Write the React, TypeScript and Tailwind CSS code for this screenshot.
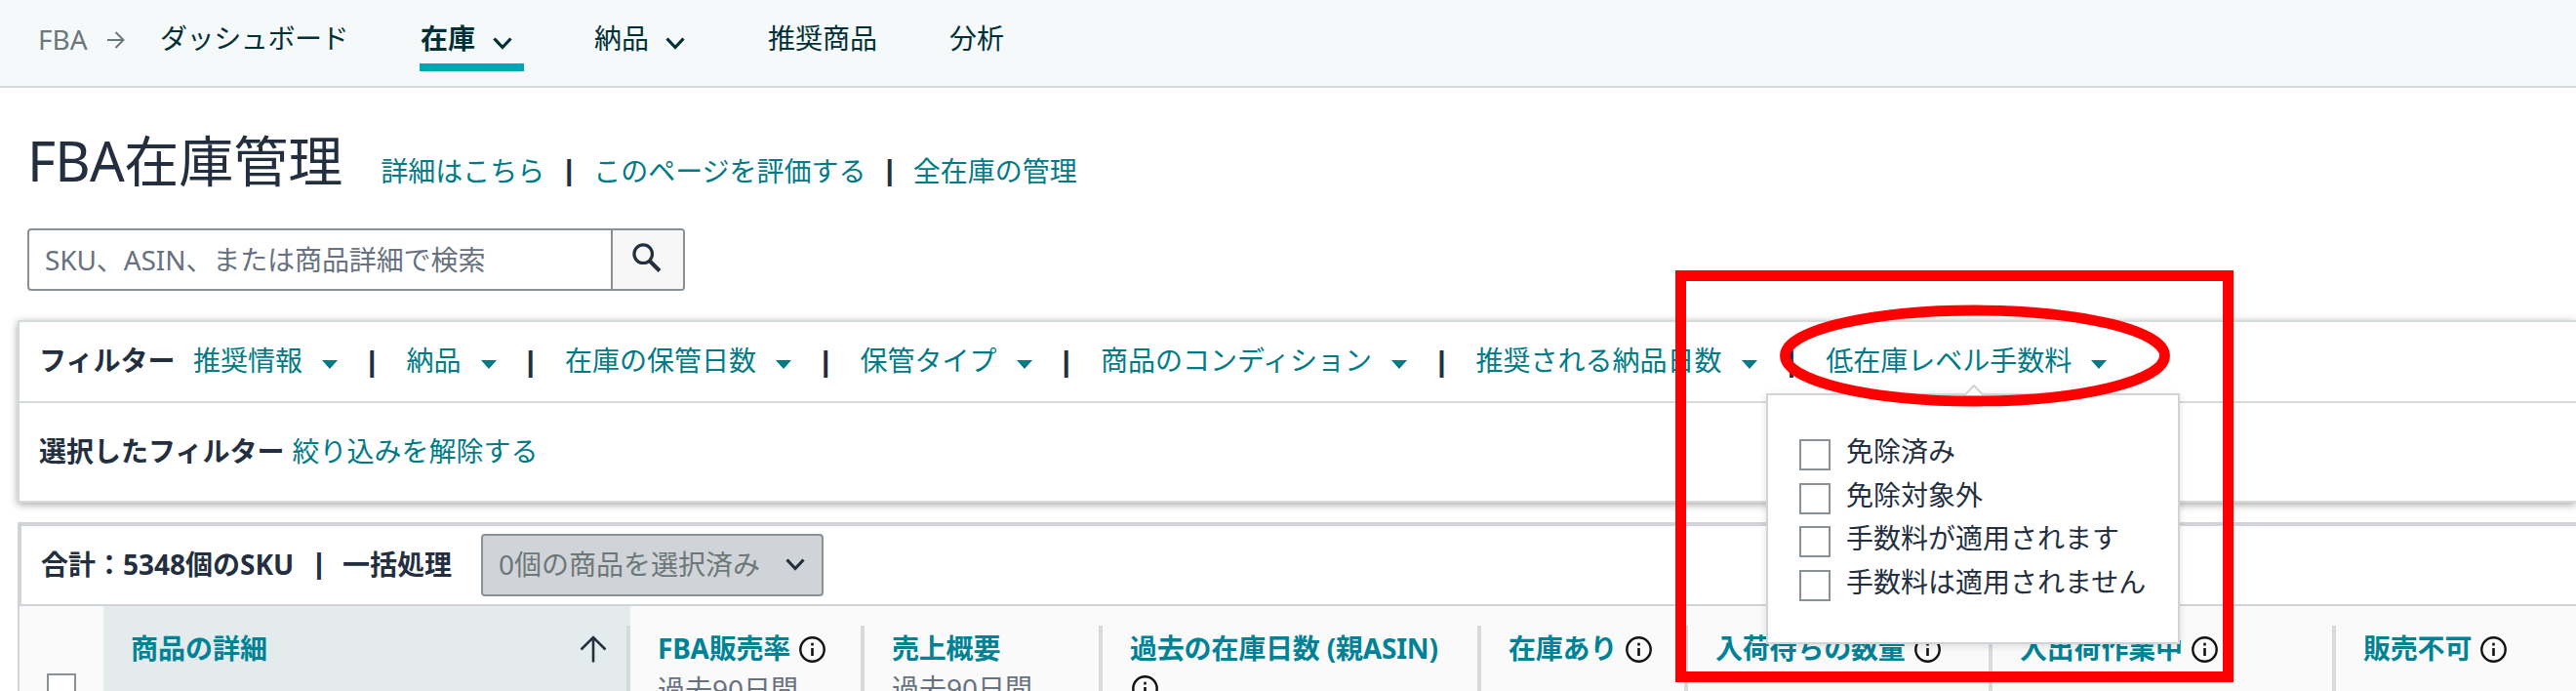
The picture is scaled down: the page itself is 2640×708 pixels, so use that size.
import { useState } from "react";
import clsx from "clsx";

// ── Data ──────────────────────────────────────────────────────────────────────

interface Column {
  label: string;
  sub?: string;
  info?: boolean;
  wrapInfo?: boolean;
  width: string;
}

const FILTERS = ["推奨情報", "納品", "在庫の保管日数", "保管タイプ", "商品のコンディション", "推奨される納品日数", "低在庫レベル手数料"];

const FEE_OPTIONS = ["免除済み", "免除対象外", "手数料が適用されます", "手数料は適用されません"];

const COLUMNS: Column[] = [
  { label: "FBA販売率", sub: "過去90日間", info: true, width: "w-[240px]" },
  { label: "売上概要", sub: "過去90日間", width: "w-[244px]" },
  { label: "過去の在庫日数 (親ASIN)", info: true, wrapInfo: true, width: "w-[388px]" },
  { label: "在庫あり", info: true, width: "w-[212px]" },
  { label: "入荷待ちの数量", info: true, width: "w-[312px]" },
  { label: "入出荷作業中", info: true, width: "w-[352px]" },
  { label: "販売不可", info: true, width: "w-[300px]" },
];

// ── Icons ─────────────────────────────────────────────────────────────────────

function Chevron({ className }: { className?: string }) {
  return (
    <svg width="20" height="13" viewBox="0 0 20 13" fill="none" className={clsx("shrink-0", className)}>
      <path d="M1.500 1.500 10 10.500 18.500 1.500" stroke="currentColor" strokeWidth="3.200" />
    </svg>
  );
}

function Caret() {
  return (
    <svg width="16" height="9" viewBox="0 0 16 9" className="ml-5 mt-2 shrink-0">
      <path d="M0 0h16L8 9z" fill="#007a87" />
    </svg>
  );
}

function InfoIcon({ className }: { className?: string }) {
  return (
    <svg width="27" height="27" viewBox="0 0 27 27" fill="none" className={clsx("shrink-0", className)}>
      <circle cx="13.5" cy="13.5" r="12.2" stroke="#111" strokeWidth="2.4" />
      <path d="M13.500 12v8M13.500 6.800v2.800" stroke="#111" strokeWidth="2.6" />
    </svg>
  );
}

function Bar({ className }: { className?: string }) {
  return (
    <span className={clsx("shrink-0 text-center font-['Liberation_Sans',sans-serif] text-[30px] font-bold text-[#232f3e]", className)}>|</span>
  );
}

// ── Sections ──────────────────────────────────────────────────────────────────

function TopNav() {
  return (
    <nav className="flex h-[90px] items-start border-b-2 border-[#d5dbdb] bg-[#f5f9fa] pl-[39px] pt-[25px] text-[#002f36]">
      <span className="w-12 pt-px text-[#6c7778]">FBA</span>
      <svg width="18" height="18" viewBox="0 0 18 18" fill="none" className="ml-[23px] mt-[7px]">
        <path d="M0 9h16M8.500 1l8 8-8 8" stroke="#6c7778" strokeWidth="2" />
      </svg>
      <span className="ml-[36px] w-[266px] tracking-[-0.4px]">ダッシュボード</span>
      <div className="flex h-12 w-[107px] justify-between border-b-8 border-[#00a4b4] pl-px pr-[12px] font-bold">
        在庫
        <Chevron className="mt-[13px]" />
      </div>
      <div className="ml-[72px] flex w-[178px] gap-[17px]">
        納品
        <Chevron className="mt-[13px]" />
      </div>
      <span className="w-[186px]">推奨商品</span>
      <span>分析</span>
    </nav>
  );
}

function TitleRow() {
  return (
    <div className="mt-[46px] flex h-14 items-baseline pl-7">
      <h1 className="text-[56px] leading-[56px] text-[#232f3e]">
        <span className="tracking-[-0.7px]">FBA</span>在庫管理
      </h1>
      <div className="ml-[39px] flex text-[#007a87]">
        <a>詳細はこちら</a>
        <Bar className="w-[50px]" />
        <a>このページを評価する</a>
        <Bar className="w-[48px]" />
        <a>全在庫の管理</a>
      </div>
    </div>
  );
}

function SearchBox() {
  return (
    <div className="ml-7 mt-[42px] flex h-16 w-[674px] overflow-hidden rounded-[4px] border-2 border-[#879196]">
      <div className="flex-1 pl-4 pt-4 tracking-[-0.1px] text-[#67717f]">SKU、ASIN、または商品詳細で検索</div>
      <div className="w-[74px] border-l-2 border-[#879196] bg-[#f7f7f7] pl-5 pt-[13px]">
        <svg width="30" height="30" viewBox="0 0 30 30" fill="none">
          <circle cx="11.2" cy="11.2" r="9.3" stroke="#232f3e" strokeWidth="3.2" />
          <path d="M18 18.500 28 28.500" stroke="#232f3e" strokeWidth="4" />
        </svg>
      </div>
    </div>
  );
}

function FeePopover() {
  const [checked, setChecked] = useState<string[]>([]);
  const toggle = (o: string) => setChecked((c) => (c.includes(o) ? c.filter((x) => x !== o) : [...c, o]));

  return (
    <div className="absolute left-[1810px] top-[403px] h-[257px] w-[424px] border-2 border-[#d0d4d9] bg-white pl-8 pt-[45px] shadow-[0_2px_8px_rgba(0,0,0,0.12)]">
      <svg width="20" height="12" viewBox="0 0 20 12" className="absolute left-[201px] top-[-11px]">
        <path d="M0 12 10 1l10 11z" fill="#fff" />
        <path d="M0.500 11 10 1l9.500 10" fill="none" stroke="#d0d4d9" strokeWidth="2" />
      </svg>
      {FEE_OPTIONS.map((o) => (
        <label key={o} className="flex h-[44.670px] gap-4 text-[#232f3e]">
          <input
            type="checkbox"
            checked={checked.includes(o)}
            onChange={() => toggle(o)}
            className="size-8 shrink-0 appearance-none border-2 border-[#879196] bg-white checked:bg-[#008296]"
          />
          <span className="-mt-0.5">{o}</span>
        </label>
      ))}
    </div>
  );
}

function FilterPanel() {
  return (
    <section className="ml-[18px] mt-[30px] h-[187px] border-2 border-r-0 border-[#d5dbdb] shadow-[0_2px_8px_rgba(0,0,0,0.35)]">
      <div className="flex h-[83px] items-start border-b-2 border-[#d5dbdb] pl-5 pt-[25px]">
        <strong className="mr-[18px] w-[140px] text-[#232f3e]">フィルター</strong>
        {FILTERS.map((f, i) => (
          <div key={f} className="flex h-7 items-center whitespace-nowrap text-[#007a87]">
            {i > 0 && <Bar className="w-[70.500px] pt-[3px]" />}
            {f}
            <Caret />
          </div>
        ))}
      </div>
      <div className="flex gap-2 pl-5 pt-[35px]">
        <strong className="text-[#232f3e]">選択したフィルター</strong>
        <a className="text-[#007a87]">絞り込みを解除する</a>
      </div>
    </section>
  );
}

function InventoryTable() {
  return (
    <section className="ml-[18px] mt-5 h-[173px] border-l-2 border-[#d0d4d9]">
      <div className="flex h-[86px] items-start border-b-2 border-l-2 border-t-4 border-[#d0d4d9] pl-5 text-[#232f3e]">
        <strong className="mt-[25px] w-[261px] whitespace-nowrap">合計：5348個のSKU</strong>
        <Bar className="mt-[25px] w-12" />
        <strong className="mt-[25px] w-28">一括処理</strong>
        <button className="ml-[30px] mt-2 flex h-16 w-[351px] items-start rounded-[4px] border-2 border-[#879196] bg-[#d0d4d9] pl-4 pt-[15px] text-[#6c7778]">
          0個の商品を選択済み
          <Chevron className="ml-[26px] mt-2 text-[#232f3e]" />
        </button>
      </div>
      <div className="flex h-[87px] w-[2680px] bg-[#fafafa]">
        <div className="w-[86px] pl-7 pt-[69px]">
          <div className="size-[30px] border-2 border-[#879196] bg-white" />
        </div>
        <div className="flex w-[540px] bg-[#e3ebec]">
          <div className="flex flex-1 justify-between pl-7 pr-5 pt-[29px]">
            <strong className="text-[#008296]">商品の詳細</strong>
            <svg width="28" height="28" viewBox="0 0 28 28" fill="none" className="mt-px">
              <path d="M14 27.500V2M1.500 14.500 14 2l12.500 12.500" stroke="#232f3e" strokeWidth="2.600" />
            </svg>
          </div>
          <div className="mt-5 w-1 bg-[#d5dbdb]" />
        </div>
        {COLUMNS.map((c) => (
          <div key={c.label} className={clsx("flex shrink-0", c.width)}>
            <div className="flex-1 pl-7 pt-[29px]">
              <div className={clsx("flex whitespace-nowrap", c.wrapInfo && "flex-col")}>
                <strong className="tracking-[-0.2px] text-[#008296]">{c.label}</strong>
                {c.info && <InfoIcon className={c.wrapInfo ? "ml-0.5 mt-3.5" : "ml-[9px] mt-0.5"} />}
              </div>
              {c.sub && <div className="mt-[13px] whitespace-nowrap text-[#67717f]">{c.sub}</div>}
            </div>
            <div className="mt-5 w-1 bg-[#d5dbdb]" />
          </div>
        ))}
      </div>
    </section>
  );
}

// Red markup drawn on top of the page
function Highlight() {
  return (
    <>
      <div className="pointer-events-none absolute left-[1716.500px] top-[277px] h-[422px] w-[572px] border-[11px] border-[#ff0000]" />
      <svg width="402" height="106" viewBox="0 0 402 106" fill="none" className="pointer-events-none absolute left-[1823px] top-[312px]">
        <ellipse cx="201" cy="52.500" rx="194.500" ry="46.500" stroke="#ff0000" strokeWidth="10.800" />
      </svg>
    </>
  );
}

export default function App() {
  return (
    <div className="relative h-[708px] w-[2640px] overflow-hidden bg-white font-['Noto_Sans','Noto_Sans_CJK_JP',sans-serif] text-[28px] leading-[28px]">
      <TopNav />
      <TitleRow />
      <SearchBox />
      <FilterPanel />
      <InventoryTable />
      <FeePopover />
      <Highlight />
    </div>
  );
}
